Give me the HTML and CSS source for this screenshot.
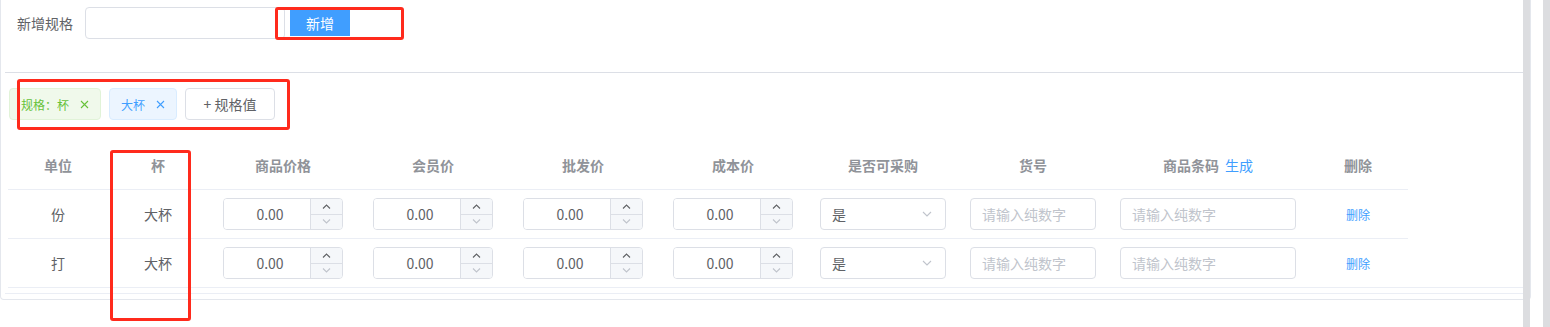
FILE: index.html
```html
<!DOCTYPE html>
<html lang="zh-CN">
<head>
    <meta charset="UTF-8">
    <meta name="viewport" content="width=device-width, initial-scale=1.0">
    <title>商品规格</title>
    <link rel="stylesheet" href="styles.css">
</head>
<body>
    <div class="card">
        <!-- 新增规格 -->
        <div class="spec-add">
            <label class="spec-add-label" for="spec-name">新增规格</label>
            <input class="spec-add-input" id="spec-name" type="text">
            <button class="btn-primary" type="button">新增</button>
        </div>

        <div class="spec-panel">
            <div class="tag-row">
                <span class="tag tag-success">规格：杯
                    <svg class="tag-close" viewBox="0 0 9 9"><path d="M1 1L8 8M8 1L1 8"/></svg>
                </span>
                <span class="tag tag-primary">大杯
                    <svg class="tag-close" viewBox="0 0 9 9"><path d="M1 1L8 8M8 1L1 8"/></svg>
                </span>
                <button class="btn-plain" type="button">+ 规格值</button>
            </div>

            <div class="table-wrap">
                <table class="sku-table">
                    <colgroup>
                        <col style="width: 100px">
                        <col style="width: 100px">
                        <col style="width: 150px">
                        <col style="width: 150px">
                        <col style="width: 150px">
                        <col style="width: 150px">
                        <col style="width: 150px">
                        <col style="width: 150px">
                        <col style="width: 200px">
                        <col style="width: 100px">
                    </colgroup>
                    <thead>
                        <tr>
                            <th><div class="head-cell">单位</div></th>
                            <th><div class="head-cell">杯</div></th>
                            <th><div class="head-cell">商品价格</div></th>
                            <th><div class="head-cell">会员价</div></th>
                            <th><div class="head-cell">批发价</div></th>
                            <th><div class="head-cell">成本价</div></th>
                            <th><div class="head-cell">是否可采购</div></th>
                            <th><div class="head-cell">货号</div></th>
                            <th><div class="head-cell">商品条码<a class="link-gen">生成</a></div></th>
                            <th><div class="head-cell">删除</div></th>
                        </tr>
                    </thead>
                    <tbody id="sku-body"></tbody>
                </table>
            </div>
        </div>
    </div>

    <!-- 标注框 -->
    <div class="mark mark-add"></div>
    <div class="mark mark-tags"></div>
    <div class="mark mark-col"></div>

    <!-- 滚动条 -->
    <div class="scrollbar scrollbar-inner"></div>
    <div class="scrollbar scrollbar-page"></div>

    <script>
        // 规格行数据
        const rows = [
            { unit: '份', cup: '大杯' },
            { unit: '打', cup: '大杯' }
        ];

        function numInput() {
            return `
                <div class="num-input">
                    <input class="num-field" type="text" value="0.00">
                    <span class="num-ctrl">
                        <span class="num-up"><svg viewBox="0 0 9 5"><polyline points="1,4.5 4.5,1 8,4.5"/></svg></span>
                        <span class="num-down"><svg viewBox="0 0 9 5"><polyline points="1,0.5 4.5,4 8,0.5"/></svg></span>
                    </span>
                </div>`;
        }

        const body = document.getElementById('sku-body');
        rows.forEach(row => {
            const tr = document.createElement('tr');
            tr.innerHTML = `
                <td><div class="cell">${row.unit}</div></td>
                <td><div class="cell">${row.cup}</div></td>
                <td><div class="cell">${numInput()}</div></td>
                <td><div class="cell">${numInput()}</div></td>
                <td><div class="cell">${numInput()}</div></td>
                <td><div class="cell">${numInput()}</div></td>
                <td><div class="cell">
                    <div class="select">
                        <span>是</span>
                        <svg class="select-arrow" viewBox="0 0 10 6"><polyline points="1,1 5,5 9,1"/></svg>
                    </div>
                </div></td>
                <td><div class="cell"><input class="text-input" type="text" placeholder="请输入纯数字"></div></td>
                <td><div class="cell"><input class="text-input text-input-wide" type="text" placeholder="请输入纯数字"></div></td>
                <td><div class="cell"><a class="link-del">删除</a></div></td>`;
            body.appendChild(tr);
        });
    </script>
</body>
</html>
```

FILE: styles.css
```css
* {
    margin: 0;
    padding: 0;
    box-sizing: border-box;
}

html, body {
    width: 100%;
    height: 100%;
    overflow: hidden;
}

body {
    position: relative;
    background: #fff;
    color: #606266;
    font-family: "Noto Sans CJK SC", "Noto Sans", sans-serif;
    font-size: 14px;
}

input, button {
    font-family: inherit;
    outline: none;
}

/* 外层卡片 */
.card {
    width: 1531px;
    padding: 7px 5px 5px 4px;
    border: 1px solid #e4e7ed;
    border-top: none;
    border-radius: 0 0 4px 4px;
}

/* 新增规格 */
.spec-add {
    display: flex;
    align-items: center;
    height: 32px;
    padding-left: 12px;
    margin-bottom: 33px;
}

.spec-add-label {
    font-size: 14px;
    line-height: 30px;
    margin-right: 12px;
    color: #606266;
}

.spec-add-input {
    width: 200px;
    height: 32px;
    border: 1px solid #dcdfe6;
    border-radius: 4px;
    padding: 0 12px;
}

.btn-primary {
    align-self: flex-start;
    width: 60px;
    height: 26px;
    margin-left: 5px;
    margin-top: 3px;
    border: none;
    background-color: #409eff;
    color: #fff;
    font-size: 14px;
}

/* 规格面板 */
.spec-panel {
    border-top: 1px solid #dcdfe6;
    border-bottom: 1px solid #ebeef5;
    padding: 15px 0 5px 3px;
}

.tag-row {
    display: flex;
    gap: 8px;
    padding: 0 0 20px 1px;
}

.tag {
    display: inline-flex;
    align-items: center;
    height: 32px;
    padding: 0 11px;
    border: 1px solid;
    border-radius: 4px;
    font-size: 12px;
}

.tag-success {
    background-color: #f0f9eb;
    border-color: #e1f3d8;
    color: #67c23a;
}

.tag-primary {
    background-color: #ecf5ff;
    border-color: #d9ecff;
    color: #409eff;
}

.tag-close {
    width: 9px;
    height: 9px;
    margin-left: 11px;
    fill: none;
    stroke: currentColor;
    stroke-width: 1.1;
}

.btn-plain {
    width: 90px;
    height: 32px;
    border: 1px solid #dcdfe6;
    border-radius: 4px;
    background: #fff;
    color: #606266;
    font-size: 14px;
}

/* 表格 */
.table-wrap {
    margin-right: 2px;
    border-bottom: 1px solid #ebeef5;
}

.sku-table {
    width: 1400px;
    table-layout: fixed;
    border-collapse: separate;
    border-spacing: 0;
}

.sku-table th,
.sku-table td {
    padding: 0;
    border-bottom: 1px solid #ebeef5;
}

.sku-table tbody tr:last-child td {
    border-bottom: none;
}

.head-cell {
    height: 49px;
    display: flex;
    align-items: center;
    justify-content: center;
    font-size: 14px;
    font-weight: bold;
    color: #909399;
}

.link-gen {
    margin-left: 6px;
    font-weight: normal;
    color: #409eff;
}

.cell {
    height: 48px;
    display: flex;
    align-items: center;
    justify-content: center;
    font-size: 14px;
    color: #606266;
}

/* 数字输入框 */
.num-input {
    display: flex;
    width: 120px;
    height: 32px;
    border: 1px solid #dcdfe6;
    border-radius: 4px;
    overflow: hidden;
}

.num-field {
    flex: 1;
    min-width: 0;
    border: none;
    padding-left: 6px;
    text-align: center;
    font-size: 14px;
    color: #606266;
}

.num-ctrl {
    width: 32px;
    display: flex;
    flex-direction: column;
    border-left: 1px solid #dcdfe6;
    background-color: #f5f7fa;
}

.num-up,
.num-down {
    flex: 1;
    display: flex;
    align-items: center;
    justify-content: center;
}

.num-up {
    border-bottom: 1px solid #dcdfe6;
}

.num-ctrl svg {
    width: 9px;
    height: 5px;
    fill: none;
    stroke-width: 1.1;
}

.num-up svg {
    stroke: #606266;
}

.num-down svg {
    stroke: #c0c4cc;
}

/* 下拉框 */
.select {
    width: 126px;
    height: 32px;
    display: flex;
    align-items: center;
    justify-content: space-between;
    padding: 0 13px 0 11px;
    border: 1px solid #dcdfe6;
    border-radius: 4px;
    color: #606266;
}

.select-arrow {
    width: 10px;
    height: 6px;
    fill: none;
    stroke: #c0c4cc;
    stroke-width: 1.1;
}

/* 文本输入框 */
.text-input {
    width: 126px;
    height: 32px;
    padding: 0 11px;
    border: 1px solid #dcdfe6;
    border-radius: 4px;
    font-size: 14px;
    color: #606266;
}

.text-input::placeholder {
    color: #c0c4cc;
}

.text-input-wide {
    width: 176px;
}

.link-del {
    font-size: 12px;
    color: #409eff;
}

/* 红色标注框 */
.mark {
    position: absolute;
    border: 3px solid #ff2a1c;
    border-radius: 3px;
    pointer-events: none;
}

.mark-add {
    left: 275px;
    top: 7px;
    width: 129px;
    height: 33px;
}

.mark-tags {
    left: 17px;
    top: 79px;
    width: 273px;
    height: 51px;
}

.mark-col {
    left: 110px;
    top: 150px;
    width: 81px;
    height: 171px;
}

/* 滚动条 */
.scrollbar {
    position: absolute;
    top: 0;
    width: 7px;
    height: 100%;
    background-color: #dcdde0;
}

.scrollbar-inner {
    left: 1523px;
}

.scrollbar-page {
    left: 1543px;
}
```
